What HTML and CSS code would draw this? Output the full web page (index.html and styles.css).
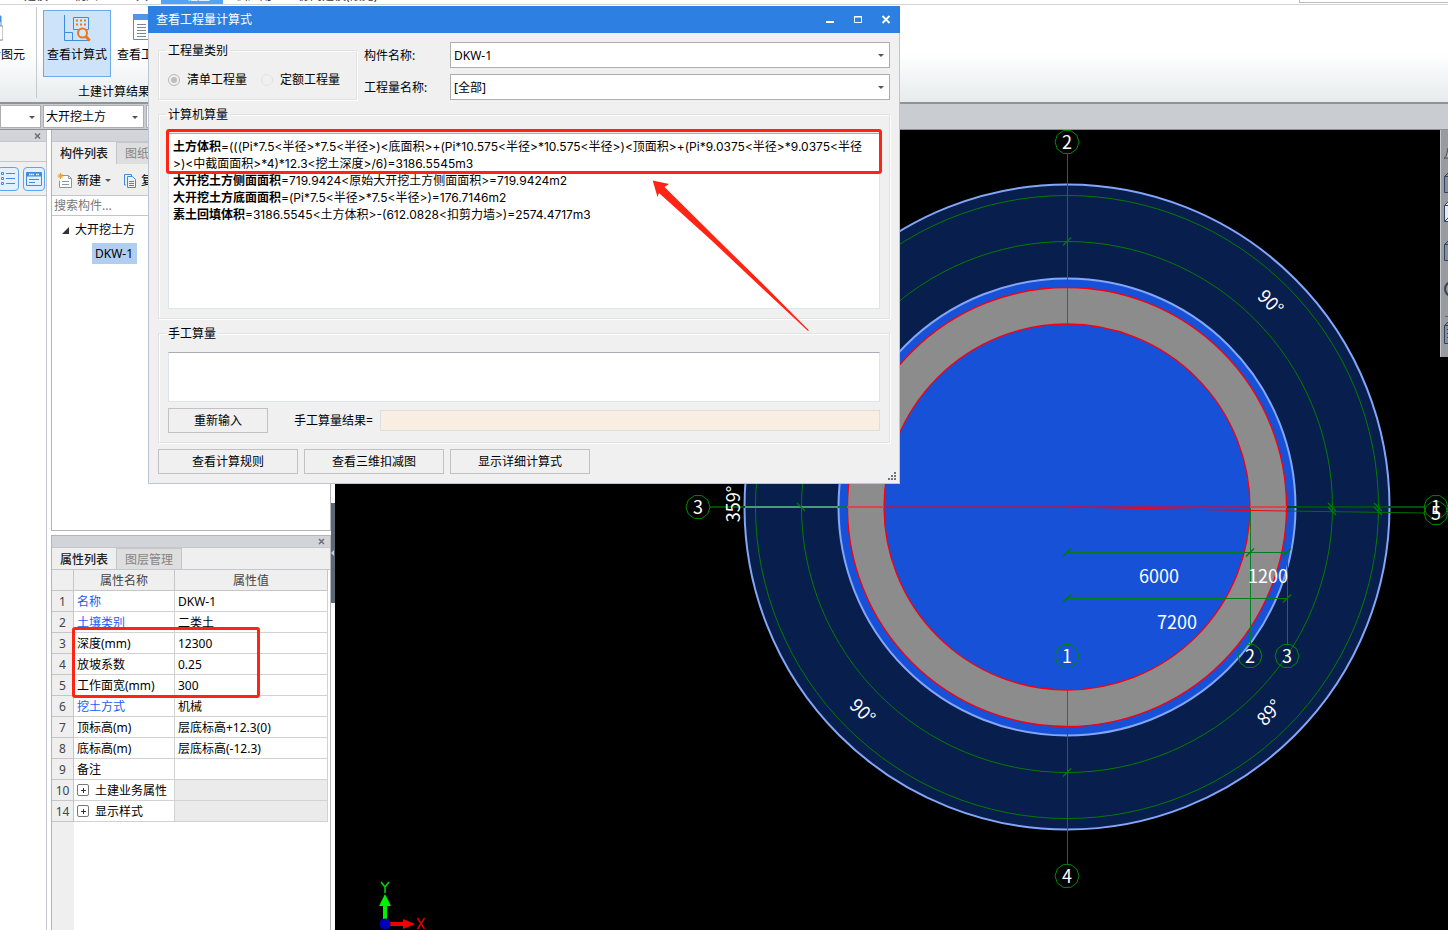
FILE: index.html
```html
<!DOCTYPE html>
<html lang="zh-CN">
<head>
<meta charset="utf-8">
<title>查看工程量计算式</title>
<link rel="stylesheet" href="styles.css">
</head>
<body>
<div class="app">
  <nav class="menu">
    <a href="#">建模</a><a href="#">视图</a><a href="#">工具</a><a href="#" class="active">工程量</a><a href="#">云应用</a><a href="#">协同建模(限免)</a>
    <span class="menu-search"></span>
  </nav>
  <header class="ribbon">
    <div class="ribbon-cut">
      <svg width="28" height="28" viewBox="0 0 28 28" fill="none"><path d="M8 2h18v24H8z" fill="#fff" stroke="#4a90e0"/><path d="M8 2h18v6H8z" fill="#4a90e0"/><path d="M14 12h14v14H14z" fill="#fff" stroke="#8a9299"/><path d="M16 15h8M16 18h8M16 21h8" stroke="#8a9299"/></svg>
      <span>查看图元</span>
    </div>
    <div class="ribbon-group">
      <div class="ribbon-buttons">
        <button class="rbtn selected">
          <svg width="28" height="28" viewBox="0 0 28 28" fill="none"><path d="M1.500 1v25.500H27" stroke="#3f8be0"/><path d="M1.500 18.500h8v8" stroke="#3f8be0"/><path d="M10.500 3.500h15v12h-15z" stroke="#3f8be0" fill="#d5e7fb"/><path d="M13 6.500h10M13 10.500h10" stroke="#f0761c" stroke-width="2" stroke-dasharray="2 2"/><circle cx="19.500" cy="19" r="4.500" stroke="#f0761c" stroke-width="2" fill="#d5e7fb"/><path d="M22.500 22l4 4.500" stroke="#f0761c" stroke-width="3"/></svg>
          <span>查看计算式</span>
        </button>
        <button class="rbtn">
          <svg width="28" height="28" viewBox="0 0 28 28" fill="none"><path d="M.500.500h26v25H.500z" fill="#fff" stroke="#4a90e0"/><path d="M0 0h27v6H0z" fill="#4f97e4"/><path d="M4 10.500h9M4 13.500h9M4 16.500h9M4 19.500h9M4 22.500h9" stroke="#7d868e"/></svg>
          <span>查看工程量</span>
        </button>
      </div>
      <div class="ribbon-label">土建计算结果</div>
    </div>
  </header>
  <div class="combos">
    <span class="combo floor"><select aria-label="楼层"><option></option></select></span>
    <span class="combo kind"><select aria-label="构件类型"><option>大开挖土方</option></select></span>
    <span class="combo item"><select aria-label="构件"><option>DKW-1</option></select></span>
  </div>
  <main class="work">
    <aside class="rail">
      <div class="titlebar"><button class="x" aria-label="关闭"><svg width="8" height="8" viewBox="0 0 8 8"><path d="M1 1.500l5 5M6 1.500l-5 5" stroke="#6b6f75" stroke-width="1.500"/></svg></button></div>
      <div class="rail-head"></div>
      <div class="rail-tools">
        <button class="view" aria-label="列表视图"><svg width="16" height="16" viewBox="0 0 16 16" fill="none" stroke="#3f8be0"><path d="M1.500 1.500h2v2h-2zM1.500 6.500h2v2h-2zM1.500 11.500h2v2h-2z"/><path d="M6 2.500h9M6 7.500h9M6 12.500h9"/></svg></button>
        <button class="view" aria-label="分类视图"><svg width="16" height="16" viewBox="0 0 16 16" fill="none" stroke="#3f8be0"><path d="M.500 1.500h15v13H.500z"/><path d="M1 3.500h14" stroke-width="4"/><path d="M3 3.500h5M10 3.500h3" stroke="#fff" stroke-width="1.500" stroke-dasharray="1.500 .5"/><path d="M3 8.500h10M3 11.500h6"/></svg></button>
      </div>
    </aside>
    <div class="docks">
      <section class="dock parts">
        <div class="titlebar"></div>
        <div class="tabs"><button class="tab on">构件列表</button><button class="tab">图纸管理</button></div>
        <div class="tools">
          <button class="tool"><svg width="16" height="16" viewBox="0 0 16 16" fill="none"><path d="M4.500 2.500h7l3 3v9h-12v-7" fill="#fff" stroke="#8b969e"/><path d="M11.500 2.500v3h3M5 8.500h7M5 11.500h7" stroke="#8b969e"/><path d="M3.500 0v6M.500 3h6M1.500 1l4 4M5.500 1l-4 4" stroke="#f09a2a"/></svg><span>新建</span><i class="caret"></i></button>
          <button class="tool"><svg width="14" height="14" viewBox="0 0 14 14" fill="none" stroke="#3f8be0"><path d="M3 11H1.500V.500h7V2"/><path d="M4.500 2.500h5l3 3v8h-8zM6 7.500h5M6 9.500h5M6 11.500h5"/></svg><span>复制</span></button>
        </div>
        <input class="search" type="text" placeholder="搜索构件..." aria-label="搜索构件">
        <ul class="tree">
          <li><svg width="7" height="7" viewBox="0 0 7 7"><path d="M7 0v7H0z" fill="#333"/></svg>大开挖土方
            <ul><li><span class="picked">DKW-1</span></li></ul>
          </li>
        </ul>
      </section>
      <section class="dock props">
        <div class="titlebar"><button class="x" aria-label="关闭"><svg width="8" height="8" viewBox="0 0 8 8"><path d="M1 1l5 5M6 1l-5 5" stroke="#6b6f75" stroke-width="1.500"/></svg></button></div>
        <div class="tabs"><button class="tab on">属性列表</button><button class="tab">图层管理</button></div>
        <div class="grid-area">
          <table class="grid">
            <thead><tr><th class="n"></th><th class="k">属性名称</th><th>属性值</th></tr></thead>
            <tbody>
              <tr><th>1</th><td class="blue">名称</td><td>DKW-1</td></tr>
              <tr><th>2</th><td class="blue">土壤类别</td><td>二类土</td></tr>
              <tr><th>3</th><td>深度(mm)</td><td>12300</td></tr>
              <tr><th>4</th><td>放坡系数</td><td>0.25</td></tr>
              <tr><th>5</th><td>工作面宽(mm)</td><td>300</td></tr>
              <tr><th>6</th><td class="blue">挖土方式</td><td>机械</td></tr>
              <tr><th>7</th><td>顶标高(m)</td><td>层底标高+12.3(0)</td></tr>
              <tr><th>8</th><td>底标高(m)</td><td>层底标高(-12.3)</td></tr>
              <tr><th>9</th><td>备注</td><td></td></tr>
              <tr><th>10</th><td><button class="plus" aria-label="展开"></button>土建业务属性</td><td class="off"></td></tr>
              <tr><th>14</th><td><button class="plus" aria-label="展开"></button>显示样式</td><td class="off"></td></tr>
            </tbody>
          </table>
          <div class="mark mark-props"></div>
        </div>
      </section>
    </div>
    <div class="splitter"><div class="handle"><i></i></div></div>
    <section class="canvas">
      <svg class="drawing" aria-label="平面图">
        <defs>
          <polygon id="axis" points="12,0 9.700,7 3.700,11.400 -3.700,11.400 -9.700,7 -12,0 -9.700,-7 -3.700,-11.400 3.700,-11.400 9.700,-7" fill="none" stroke="#008a00"/>
          <path id="tick" d="M-4 4l8-8" stroke="#007d00" stroke-width="1.300"/>
        </defs>
        <g transform="translate(-335 -130)" fill="none">
          <circle cx="1067" cy="507" r="322.500" fill="#081e4d" stroke="#83a6f8" stroke-width="2"/>
          <circle cx="1067" cy="507" r="311.500" stroke="#007d00"/>
          <circle cx="1067" cy="507" r="265.500" stroke="#007d00"/>
          <circle cx="1067" cy="507" r="228.500" fill="#1651d8" stroke="#83a6f8" stroke-width="2"/>
          <circle cx="1067" cy="507" r="219.500" fill="#8c8c8c" stroke="#f80010" stroke-width="1.300"/>
          <circle cx="1067" cy="507" r="183" fill="#1651d8" stroke="#f80010" stroke-width="1.300"/>
          <g shape-rendering="crispEdges">
            <rect x="1067" y="154" width="1" height="134" fill="#008200"/>
            <rect x="1067" y="726" width="1" height="138" fill="#008200"/>
            <rect x="1067" y="288" width="1" height="36" fill="#f01020"/>
            <rect x="1067" y="690" width="1" height="36" fill="#f01020"/>
            <rect x="1067" y="324" width="1" height="183" fill="#b01c50"/>
            <rect x="1067" y="668" width="1" height="22" fill="#b01c50"/>
            <rect x="1067" y="507" width="1" height="138" fill="#008222"/>
            <rect x="1250" y="507" width="1" height="138" fill="#008222"/>
            <rect x="1287" y="507" width="1" height="138" fill="#008222"/>
          </g>
          <path d="M710 507h35" stroke="#004d00" stroke-width="2"/>
          <path d="M745 507h93" stroke="#4c987f" stroke-width="2"/>
          <path d="M838 507h9" stroke="#087147" stroke-width="2"/>
          <path d="M847 507h37M1250 507h37" stroke="#d4474e" stroke-width="2"/>
          <path d="M884 507h366" stroke="#8c2576" stroke-width="2"/>
          <path d="M1067 507l183 3.500 37 .500" stroke="#f80010"/>
          <path d="M1287 507h138" stroke="#004d10" stroke-width="2"/>
          <path d="M1287 511l138 2" stroke="#007000"/>
          <path d="M1067 552.500h220M1067 598.500h220" stroke="#007d1c"/>
          <use href="#tick" x="1067" y="552.500"/><use href="#tick" x="1250" y="552.500"/><use href="#tick" x="1287" y="552.500"/>
          <use href="#tick" x="1067" y="598.500"/><use href="#tick" x="1287" y="598.500"/>
          <use href="#tick" x="1067" y="241.500"/><use href="#tick" x="1067" y="772.500"/>
          <path d="M797 503l8 8M1328 503l8 8M1328 507l8 8M1374 503l8 8M1374 507l8 8" stroke="#007d00" stroke-width="1.300"/>
          <use href="#axis" x="1067" y="142"/><use href="#axis" x="698" y="507"/><use href="#axis" x="1067" y="876"/>
          <use href="#axis" x="1067" y="656"/><use href="#axis" x="1250" y="656"/><use href="#axis" x="1287" y="656"/>
          <use href="#axis" x="1436" y="507"/><use href="#axis" x="1436" y="513"/>
          <g class="cad">
            <text x="1067" y="149">2</text><text x="698" y="514">3</text><text x="1067" y="883">4</text>
            <text x="1067" y="663">1</text><text x="1250" y="663">2</text><text x="1287" y="663">3</text>
            <text x="1436" y="514">1</text><text x="1436" y="520">5</text>
            <text x="1159" y="583">6000</text><text x="1268" y="583">1200</text><text x="1177" y="629">7200</text>
            <text transform="translate(1266 307) rotate(45)">90°</text>
            <text transform="translate(858 716) rotate(45)">90°</text>
            <text transform="translate(1274 717) rotate(-47)">89°</text>
            <text transform="translate(740 504) rotate(-90)">359°</text>
          </g>
          <path d="M385 920v-15" stroke="#00f000" stroke-width="4"/><path d="M385 894l6 12h-12z" fill="#00f000"/>
          <path d="M381 882l4 5 4-5M385 887v6" stroke="#00d800" stroke-width="1.500"/>
          <path d="M388 924h17" stroke="#f00000" stroke-width="4"/><path d="M415 924l-12 5v-10z" fill="#f00000"/>
          <path d="M417.500 918l7 11M424.500 918l-7 11" stroke="#e00000" stroke-width="1.500"/>
          <circle cx="385" cy="924" r="5.500" fill="#0000b8"/>
        </g>
      </svg>
      <div class="viewbar">
        <svg width="24" height="227" viewBox="0 0 24 227" fill="none" stroke="#35445c">
          <path d="M3 28c2 0 3-4 4-10h6l4 10z" fill="#b5b9be" stroke="#44484d"/>
          <path d="M3.500 46.500h14v16h-14zM3.500 46.500l4-4h14" fill="#8090a8"/>
          <path d="M3.500 75.500h14v16h-14zM3.500 75.500l4-4h14M3.500 91.500l5-5" fill="#dbeaff"/>
          <path d="M3.500 114.500h14v16h-14zM3.500 114.500l4-4h14" fill="#8090a8"/>
          <circle cx="11" cy="159" r="7" stroke-width="2"/><path d="M4 186.500h16" stroke="#666"/>
          <path d="M3.500 195.500h14v18h-14zM3.500 195.500l4-4h14" fill="#8090a8"/><path d="M6 199.500h10M6 203.500h10M6 207.500h10" stroke-dasharray="2 1"/>
        </svg>
      </div>
    </section>
  </main>

  <div class="dialog" role="dialog" aria-label="查看工程量计算式">
    <div class="dialog-title">
      <span>查看工程量计算式</span>
      <button aria-label="最小化"><svg width="10" height="10" viewBox="0 0 10 10"><path d="M1 6h8v2H1z" fill="#fff"/></svg></button>
      <button aria-label="最大化"><svg width="10" height="10" viewBox="0 0 10 10" fill="none"><path d="M1.500 1.500h7v6h-7zM1 2h8" stroke="#fff"/></svg></button>
      <button aria-label="关闭"><svg width="10" height="10" viewBox="0 0 10 10"><path d="M1.500 1l7 7M8.500 1l-7 7" stroke="#fff" stroke-width="1.800"/></svg></button>
    </div>
    <div class="dialog-body">
      <div class="head-row">
        <fieldset class="box kinds">
          <legend>工程量类别</legend>
          <label><input type="radio" name="kind" checked disabled>清单工程量</label>
          <label class="second"><input type="radio" name="kind" disabled>定额工程量</label>
        </fieldset>
        <div class="fields">
          <label for="cname">构件名称:</label>
          <span class="combo"><select id="cname"><option>DKW-1</option></select></span>
          <label for="qname">工程量名称:</label>
          <span class="combo"><select id="qname"><option>[全部]</option></select></span>
        </div>
      </div>
      <fieldset class="box">
        <legend>计算机算量</legend>
        <div class="result">
          <p><b>土方体积</b>=(((Pi*7.5&lt;半径&gt;*7.5&lt;半径&gt;)&lt;底面积&gt;+(Pi*10.575&lt;半径&gt;*10.575&lt;半径&gt;)&lt;顶面积&gt;+(Pi*9.0375&lt;半径&gt;*9.0375&lt;半径<br>&gt;)&lt;中截面面积&gt;*4)*12.3&lt;挖土深度&gt;/6)=3186.5545m3</p>
          <p><b>大开挖土方侧面面积</b>=719.9424&lt;原始大开挖土方侧面面积&gt;=719.9424m2</p>
          <p><b>大开挖土方底面面积</b>=(Pi*7.5&lt;半径&gt;*7.5&lt;半径&gt;)=176.7146m2</p>
          <p><b>素土回填体积</b>=3186.5545&lt;土方体积&gt;-(612.0828&lt;扣剪力墙&gt;)=2574.4717m3</p>
          <div class="mark mark-result"></div>
          <svg class="arrow" width="158" height="152" viewBox="652 180 158 152"><path d="M652.700 180.500L669 184l-4.500 3L718 240l50 49 41 41.500-1 .5-44-41-53-50-52-47-1.500 4z" fill="#ff2413"/></svg>
        </div>
      </fieldset>
      <fieldset class="box">
        <legend>手工算量</legend>
        <textarea class="manual" aria-label="手工算量"></textarea>
        <div class="manual-row">
          <button class="btn retype">重新输入</button>
          <label for="mres">手工算量结果=</label>
          <input id="mres" type="text" readonly>
        </div>
      </fieldset>
      <div class="actions">
        <button class="btn">查看计算规则</button>
        <button class="btn">查看三维扣减图</button>
        <button class="btn">显示详细计算式</button>
      </div>
    </div>
    <svg class="grip" width="8" height="8" viewBox="0 0 8 8" fill="#6d747a"><path d="M6 0h2v2H6zM3 3h2v2H3zM6 3h2v2H6zM0 6h2v2H0zM3 6h2v2H3zM6 6h2v2H6z"/></svg>
  </div>
</div>
</body>
</html>
```
FILE: styles.css
```css
* { box-sizing: border-box; }
body {
  margin: 0;
  font: 12px/16px "Noto Sans", "Noto Sans CJK SC", sans-serif;
  color: #000;
  background: #fff;
}
button, input, select, textarea { font: inherit; color: inherit; margin: 0; padding: 0; border: 0; border-radius: 0; background: none; outline: none; }
svg { display: block; flex: none; }
a { color: inherit; text-decoration: none; }
.app { position: relative; display: flex; flex-direction: column; height: 100vh; overflow: hidden; }

.menu { display: flex; align-items: flex-end; height: 5px; padding-left: 11px; overflow: hidden; border-bottom: 1px solid #d2d4d6; flex: none; color: #333; }
.menu a { padding: 0 13px; white-space: nowrap; flex: none; }
.menu .active { background: #55a3f8; color: #fff; }
.menu-search { margin-left: auto; width: 149px; height: 3px; align-self: flex-start; border: 1px solid #b9bbbd; border-width: 0 0 1px 1px; }

.ribbon { display: flex; flex: none; height: 99px; border-bottom: 2px solid #90949a; background: linear-gradient(#fff 50%, #e6ebec); }
.ribbon-cut { display: flex; flex-direction: column; align-items: flex-end; width: 37px; padding: 7px 11px 0 0; margin: 2px 0 4px; border-right: 1px solid #c6cacd; overflow: hidden; white-space: nowrap; gap: 5px; }
.ribbon-cut svg { margin-right: 22px; }
.ribbon-group { padding: 5px 0 0 6px; }
.ribbon-buttons { display: flex; gap: 2px; }
.rbtn { display: flex; flex-direction: column; align-items: center; gap: 5px; width: 68px; height: 67px; padding-top: 3px; border: 1px solid transparent; white-space: nowrap; }
.rbtn.selected { background: #cce3fa; border-color: #69abec; }
.ribbon-label { padding: 7px 0 0 35px; }

.combos { display: flex; flex: none; gap: 2px; height: 26px; padding: 1px 0; background: #c9ccd1; border-bottom: 1px solid #8f9297; }
.combo { position: relative; display: block; border: 1px solid #adadad; background: #fff; }
.combo select { display: block; width: 100%; height: 100%; padding: 1px 16px 0 3px; appearance: none; }
.combo::after { content: ""; position: absolute; right: 5px; top: 50%; margin-top: -1px; border: 3px solid transparent; border-top-color: #555; border-bottom: 0; }
.floor { width: 41px; }
.kind { width: 101px; }
.kind select { padding-left: 2px; }
.item { width: 120px; }

.work { display: flex; flex: 1; min-height: 0; }
.titlebar { display: flex; justify-content: flex-end; align-items: center; flex: none; height: 12px; padding-right: 4px; background: #d2d4d9; border-bottom: 1px solid #c3c6ca; }
.x { width: 8px; height: 8px; }
.rail { width: 47px; border-right: 1px solid #c3c3cb; flex: none; }
.rail-head { height: 20px; background: #efefef; border-bottom: 1px solid #c3c6ca; }
.rail-tools { display: flex; justify-content: flex-end; gap: 4px; height: 34px; padding: 5px 1px; background: #efefef; border-bottom: 1px solid #c3c6ca; }
.view { display: grid; place-items: center; flex: none; width: 22px; height: 24px; border: 1px solid #5ba5f0; border-radius: 4px; background: #e2f0ff; }

.docks { display: flex; flex-direction: column; gap: 4px; width: 280px; margin-left: 4px; flex: none; }
.dock { border: 1px solid #b3b3b8; display: flex; flex-direction: column; min-height: 0; }
.parts { flex: 1; border-top: 0; }
.props { height: 395px; border-bottom: 0; flex: none; }
.tabs { display: flex; height: 22px; flex: none; background: #efefef; }
.props .tabs { height: 21px; }
.tab { width: 65px; padding-top: 1px; background: #dedede; color: #858585; border-right: 1px solid #c3c6ca; border-top: 1px solid #c3c6ca; }
.tab.on { padding-top: 2px; background: #efefef; color: #222; font-weight: 500; border-top: 0; }
.tools { display: flex; gap: 12px; height: 32px; padding: 2px 5px 0; background: #efefef; border-bottom: 1px solid #c3c6ca; flex: none; }
.tool { display: flex; align-items: center; gap: 4px; }
.caret { border: 3px solid transparent; border-top-color: #555; border-bottom: 0; }
.search { height: 20px; padding: 0 2px; border-bottom: 1px solid #c3c6ca; flex: none; }
.search::placeholder { color: #777; opacity: 1; }
.tree, .tree ul { margin: 0; padding: 0; list-style: none; line-height: 24px; }
.tree { padding: 2px 10px; }
.tree > li > svg { display: inline-block; margin-right: 6px; }
.tree ul { padding-left: 30px; }
.picked { display: inline-block; padding: 2px 4px 2px 3px; line-height: 17px; background: #b1cdef; }

.grid-area { position: relative; flex: 1; background: linear-gradient(90deg, #efefef 22px, #fff 22px); border-top: 1px solid #c3c6ca; }
.grid { width: 276px; border-collapse: separate; border-spacing: 0; table-layout: fixed; }
.grid th, .grid td { height: 21px; padding: 2px 3px 0; line-height: 16px; border: 1px solid #d2d2d2; border-width: 0 1px 1px 0; text-align: left; white-space: nowrap; overflow: hidden; }
.grid th { background: #efefef; color: #444; font-weight: 400; text-align: center; padding: 2px 0 0; border-color: #c6c6c6; }
.n { width: 22px; }
.k { width: 101px; }
.grid .blue { color: #1a5cf5; }
.grid .off { background: #ebebeb; }
.plus { position: relative; width: 12px; height: 12px; margin-right: 6px; border: 1px solid #777; border-radius: 2px; background: linear-gradient(#333, #333) center / 5px 1px no-repeat, linear-gradient(#333, #333) center / 1px 5px no-repeat; }
.mark { position: absolute; border: 3px solid #ff2413; border-radius: 3px; pointer-events: none; }
.mark-props { left: 20px; top: 57px; width: 188px; height: 71px; }

.splitter { display: flex; width: 4px; flex: none; padding-top: 373px; background: #fff; }
.handle { display: flex; align-items: center; width: 4px; height: 100px; background: #5c6776; }
.handle i { border: 3px solid transparent; border-right-color: #c9ced6; border-left: 0; }
.canvas { position: relative; flex: 1; min-width: 0; background: #000; overflow: hidden; }
.drawing { width: 100%; height: 100%; }
.cad { font: 18px "Noto Sans CJK SC", sans-serif; fill: #fff; text-anchor: middle; }
.viewbar { position: absolute; right: 0; top: 0; width: 8px; overflow: hidden; background: #989ba0; border-left: 1px solid #c2c5c9; }

.dialog { position: absolute; left: 148px; top: 6px; width: 752px; background: #f0f0f0; border: 1px solid #bcc5d2; border-top: 0; }
.dialog-title { display: flex; align-items: center; gap: 18px; height: 27px; margin: 0 -1px; padding: 0 9px 0 8px; background: #2d80e1; color: #fff; }
.dialog-title span { margin-right: auto; }
.dialog-title button { width: 10px; height: 10px; }
.dialog-body { display: flex; flex-direction: column; gap: 6px; padding: 9px; }
.head-row { display: flex; gap: 7px; }
.fields { flex: 1; display: grid; grid-template-columns: 80px 1fr; grid-template-rows: 26px 26px; gap: 6px; align-items: center; }
.fields label { padding-top: 2px; }
.fields .combo { height: 26px; }
.box { min-width: 0; margin: 0; padding: 10px 9px 9px; border: 1px solid #e2e2e2; box-shadow: inset 1px 1px 0 #fff, 1px 1px 0 #fff; }
.box legend { margin-left: -2px; padding: 1px 2px 0; }
.kinds { display: flex; width: 199px; padding: 12px 9px 11px; }
.kinds label { display: flex; align-items: center; gap: 7px; }
.kinds .second { margin-left: 14px; }
.kinds input { display: grid; place-items: center; appearance: none; width: 12px; height: 12px; border: 1px solid #e2e2e2; border-radius: 50%; }
.kinds input:checked { border-color: #b8b8b8; }
.kinds input:checked::before { content: ""; width: 6px; height: 6px; border-radius: 50%; background: #bdbdbd; }
.result { position: relative; height: 176px; padding: 4px; font-family: Inter, "Noto Sans CJK SC", sans-serif; line-height: 17px; white-space: nowrap; background: #fff; border: 1px solid #dfe4ec; border-top-color: #a9adb3; }
.result p { margin: 0; }
.mark-result { left: -3px; top: -5px; right: -3px; height: 45px; }
.arrow { position: absolute; left: 483px; top: 46px; }
.manual { display: block; width: 100%; height: 50px; resize: none; background: #fff; border: 1px solid #dfe4ec; border-top-color: #a9adb3; }
.manual-row { display: flex; align-items: center; margin-top: 6px; }
.manual-row label { margin: 0 7px 0 26px; }
.manual-row input { flex: 1; height: 21px; background: #faeee3; border: 1px solid #dedede; }
.btn { width: 140px; height: 25px; border: 1px solid #c2c2c2; background: #f0f0f0; }
.retype { width: 100px; }
.actions { display: flex; gap: 6px; }
.grip { position: absolute; right: 3px; bottom: 3px; }
```
